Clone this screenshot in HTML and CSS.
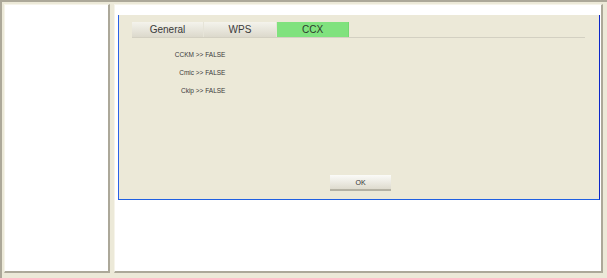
FILE: index.html
```html
<!DOCTYPE html>
<html lang="en">
<head>
   <meta charset="UTF-8">
   <title>CCX</title>
   <link rel="stylesheet" href="styles.css">
</head>
<body>
   <div class="frame">
      <div class="side-panel"></div>
      <div class="main-panel">
         <div class="dialog">
            <div class="tabs">
               <div class="tab">General</div>
               <div class="tab">WPS</div>
               <div class="tab active">CCX</div>
            </div>
            <div class="info">
               <div class="row"><span class="label">CCKM</span> &gt;&gt; FALSE</div>
               <div class="row"><span class="label">Cmic</span> &gt;&gt; FALSE</div>
               <div class="row"><span class="label">Ckip</span> &gt;&gt; FALSE</div>
            </div>
            <div class="actions">
               <button class="ok-btn">OK</button>
            </div>
         </div>
      </div>
   </div>
</body>
</html>
```

FILE: styles.css
```css
html, body {
   margin: 0;
   padding: 0;
}
body {
   width: 607px;
   height: 278px;
   background: #ece9d8;
   font-family: "Liberation Sans", Arial, sans-serif;
   overflow: hidden;
}
.frame {
   box-sizing: border-box;
   height: 278px;
   border-top: 2px solid #aca899;
   border-left: 2px solid #aca899;
   padding: 2px 4px 5px 2px;
   display: flex;
   gap: 4px;
}
.side-panel {
   box-sizing: border-box;
   width: 106px;
   background: #fff;
   border-top: 1px solid #f6f4ea;
   border-left: 1px solid #f6f4ea;
   border-right: 2px solid #aca899;
   border-bottom: 2px solid #aca899;
}
.main-panel {
   box-sizing: border-box;
   flex: 1;
   background: #fff;
   border-top: 1px solid #f6f4ea;
   border-left: 1px solid #f6f4ea;
   border-right: 2px solid #aca899;
   border-bottom: 2px solid #aca899;
   padding: 10px 0 0 3px;
}
.dialog {
   box-sizing: border-box;
   width: 482px;
   height: 185px;
   background: #ece9d8;
   border-left: 1px solid #2a62e6;
   border-right: 1px solid #0b26c8;
   border-bottom: 1px solid #1f5fe2;
   display: flex;
   flex-direction: column;
   padding: 7px 13px 8px 13px;
}
.tabs {
   display: flex;
   width: 453px;
   border-bottom: 1px solid #d3d0c2;
}
.tab {
   box-sizing: border-box;
   width: 72px;
   height: 15px;
   line-height: 15px;
   text-align: center;
   font-size: 10px;
   color: #3a3a3a;
   background: linear-gradient(#f4f3ec, #dcd9cc);
   border-right: 1px solid #e6e4d8;
}
.tab:nth-child(2) {
   width: 73px;
}
.tab.active {
   background: #80e27e;
   border-right: 1px solid #74d872;
   color: #2c3a2c;
}
.info {
   margin-top: 8px;
}
.row {
   height: 18px;
   line-height: 18px;
   font-size: 6.5px;
   color: #3a3a3a;
}
.label {
   display: inline-block;
   width: 62px;
   text-align: right;
}
.actions {
   margin-top: auto;
   padding-left: 198px;
}
.ok-btn {
   box-sizing: border-box;
   width: 61px;
   height: 16px;
   padding: 0;
   border: none;
   border-bottom: 2px solid #b4b1a3;
   background: linear-gradient(#fbfbf8, #dedbce);
   font-family: "Liberation Sans", Arial, sans-serif;
   font-size: 7px;
   color: #333;
}
```
